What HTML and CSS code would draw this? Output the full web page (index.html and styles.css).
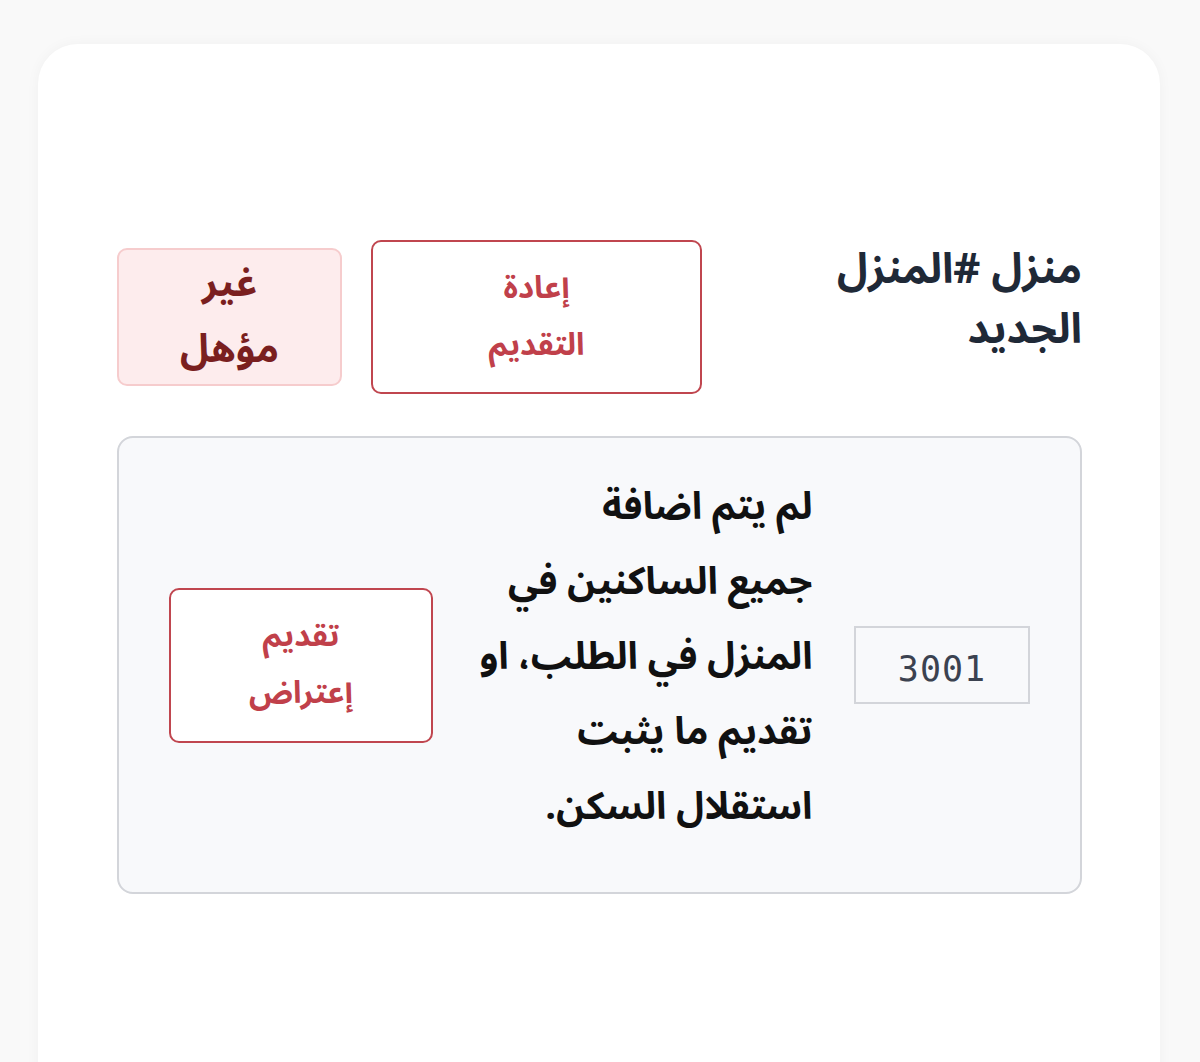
FILE: index.html
```html
<!DOCTYPE html>
<html lang="ar" dir="rtl">
<head>
<meta charset="utf-8">
<title>منزل</title>
<link rel="stylesheet" href="styles.css">
</head>
<body>
<div class="page">
  <div class="card">
    <div class="header">
      <h2 class="title">منزل #المنزل الجديد</h2>
      <div class="actions">
        <button class="btn btn-reapply">إعادة<br>التقديم</button>
        <span class="badge">غير<br>مؤهل</span>
      </div>
    </div>
    <div class="notice">
      <div class="code">3001</div>
      <p class="message">لم يتم اضافة<br>جميع الساكنين في<br>المنزل في الطلب، او<br>تقديم ما يثبت<br>استقلال السكن.</p>
      <button class="btn btn-objection">تقديم<br>إعتراض</button>
    </div>
  </div>
</div>
</body>
</html>
```

FILE: styles.css
```css
* { box-sizing: border-box; }
html, body {
  margin: 0;
  padding: 0;
  background: #f9f9f9;
  font-family: "Noto Sans Arabic", "DejaVu Sans", "Noto Sans", sans-serif;
  overflow: hidden;
}
.page {
  padding: 44px 40px 0 38px;
  height: 1062px;
}
.card {
  background: #ffffff;
  border-radius: 40px 40px 0 0;
  box-shadow: 0 0 14px rgba(0, 0, 0, 0.04);
  padding: 196px 78px 0 79px;
  height: 1100px;
}
.header {
  display: flex;
  justify-content: space-between;
  align-items: flex-start;
}
.title {
  margin: 0;
  width: 270px;
  font-size: 42px;
  line-height: 60px;
  font-weight: 700;
  color: #1f2937;
  text-align: right;
}
.actions {
  display: flex;
  align-items: center;
  gap: 29px;
}
.btn {
  font-family: inherit;
  background: #ffffff;
  border: 2px solid #c0464f;
  border-radius: 10px;
  color: #c0404a;
  font-size: 31px;
  font-weight: 700;
  line-height: 57px;
  text-align: center;
  padding: 0;
}
.btn-reapply {
  width: 331px;
  height: 154px;
}
.badge {
  display: flex;
  align-items: center;
  justify-content: center;
  text-align: center;
  width: 225px;
  height: 138px;
  background: #fdeced;
  border: 2px solid #f6cccd;
  border-radius: 10px;
  color: #7a1f1f;
  font-size: 39px;
  font-weight: 700;
  line-height: 66px;
}
.notice {
  margin-top: 42px;
  background: #f8f9fb;
  border: 2px solid #d3d5da;
  border-radius: 16px;
  height: 458px;
  padding: 0 50px;
  display: flex;
  align-items: center;
  justify-content: space-between;
}
.code {
  width: 176px;
  height: 78px;
  flex: none;
  border: 2px solid #d3d5da;
  background: #f8f9fb;
  display: flex;
  align-items: center;
  justify-content: center;
  padding-top: 8px;
  font-family: "DejaVu Sans Mono", "Liberation Mono", monospace;
  font-size: 35px;
  letter-spacing: 1px;
  color: #3b4250;
  direction: ltr;
}
.message {
  margin: 0;
  padding-bottom: 16px;
  flex: none;
  width: 338px;
  font-size: 38px;
  line-height: 75px;
  font-weight: 700;
  color: #111111;
  text-align: right;
  white-space: nowrap;
}
.btn-objection {
  width: 264px;
  height: 155px;
  flex: none;
}
```
